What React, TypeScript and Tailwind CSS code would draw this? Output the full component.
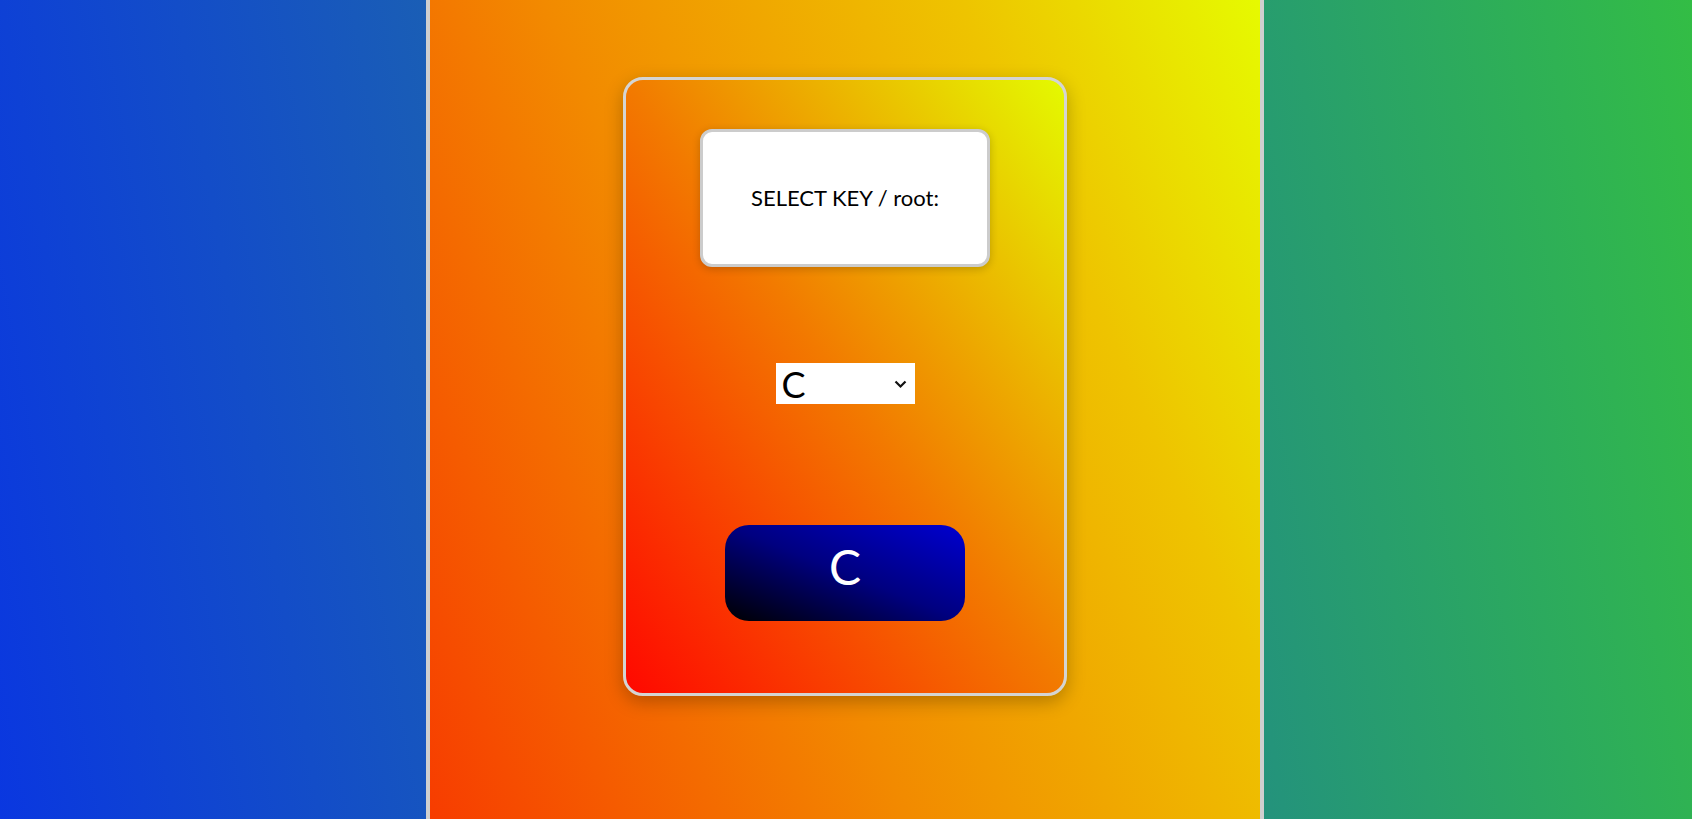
import React from 'react';

// 调式选择页：三栏背景 + 中间卡片
export default function App() {
    return (
        <div className="flex h-screen w-full bg-[linear-gradient(80deg,#0a37e0,#1c63b0_35%,#24947a_70%,#33bd45)] font-['Lato','Noto_Sans',sans-serif]">
            <div className="w-[426px]" />

            <div className="flex w-[838px] justify-center border-x-4 border-[#cfcfcf] bg-[linear-gradient(66deg,#f73c00,#f28a00_40%,#eec400_75%,#e6fa00)]">
                <div className="mt-[77px] flex h-[619px] w-[444px] flex-col items-center rounded-[20px] border-[3px] border-[#d4d4d4] bg-[linear-gradient(to_top_right,#ff0800,#f27a00_50%,#e4fa00)] pt-[49px] shadow-[0_6px_18px_rgba(0,0,0,0.25)]">
                    <div className="flex h-[138px] w-[290px] items-center justify-center rounded-[12px] border-[3px] border-[#cccccc] bg-white shadow-[0_2px_8px_rgba(0,0,0,0.2)]">
                        <span className="mb-[2px] text-[22px] text-black">SELECT KEY / root:</span>
                    </div>

                    <div className="mt-[96px] flex h-[41px] w-[139px] items-center justify-between bg-white pl-[6px] pr-[8px]">
                        <span className="text-[36px] leading-none text-black">C</span>
                        <svg width="13" height="9" viewBox="0 0 13 9" className="mt-[2px]">
                            <polyline points="1.5,1.5 6.5,6.5 11.5,1.5" fill="none" stroke="#111" strokeWidth="2.2" />
                        </svg>
                    </div>

                    <button className="mt-[121px] flex h-[96px] w-[240px] items-center justify-center rounded-[24px] bg-[linear-gradient(to_top_right,#000000,#000080_50%,#0000d0)] pb-[12px]">
                        <span className="text-[48px] leading-none text-white">C</span>
                    </button>
                </div>
            </div>

            <div className="flex-1" />
        </div>
    );
}
